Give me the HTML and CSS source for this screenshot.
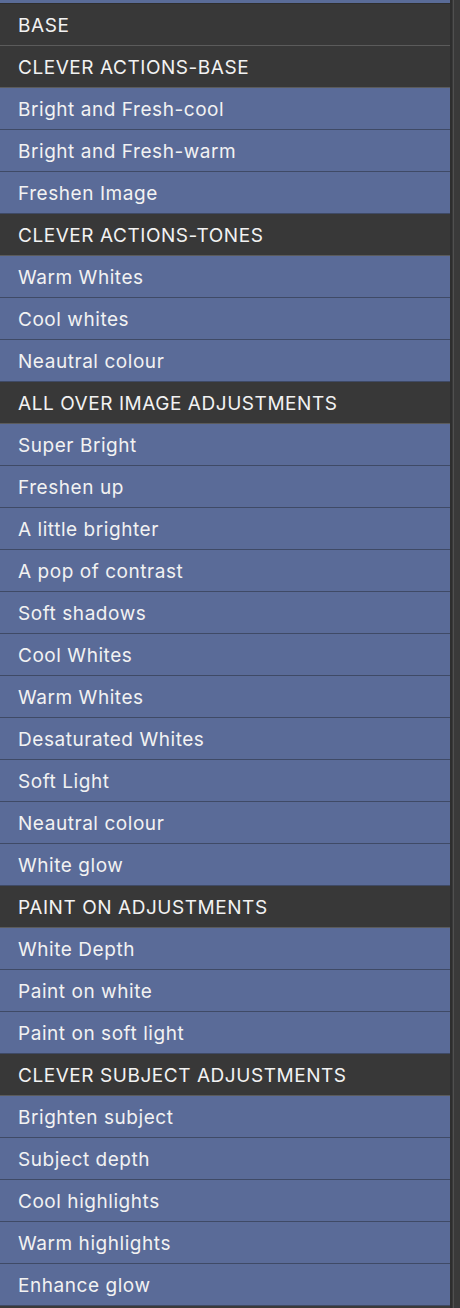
FILE: index.html
```html
<!DOCTYPE html>
<html>
<head>
<meta charset="utf-8">
<link rel="stylesheet" href="styles.css">
</head>
<body>
<div class="panel">
  <div class="list">
    <div class="top-strip"></div>
    <div class="row head">BASE</div>
    <div class="row head">CLEVER ACTIONS-BASE</div>
    <div class="row item">Bright and Fresh-cool</div>
    <div class="row item">Bright and Fresh-warm</div>
    <div class="row item">Freshen Image</div>
    <div class="row head">CLEVER ACTIONS-TONES</div>
    <div class="row item">Warm Whites</div>
    <div class="row item">Cool whites</div>
    <div class="row item">Neautral colour</div>
    <div class="row head">ALL OVER IMAGE ADJUSTMENTS</div>
    <div class="row item">Super Bright</div>
    <div class="row item">Freshen up</div>
    <div class="row item">A little brighter</div>
    <div class="row item">A pop of contrast</div>
    <div class="row item">Soft shadows</div>
    <div class="row item">Cool Whites</div>
    <div class="row item">Warm Whites</div>
    <div class="row item">Desaturated Whites</div>
    <div class="row item">Soft Light</div>
    <div class="row item">Neautral colour</div>
    <div class="row item">White glow</div>
    <div class="row head">PAINT ON ADJUSTMENTS</div>
    <div class="row item">White Depth</div>
    <div class="row item">Paint on white</div>
    <div class="row item">Paint on soft light</div>
    <div class="row head">CLEVER SUBJECT ADJUSTMENTS</div>
    <div class="row item">Brighten subject</div>
    <div class="row item">Subject depth</div>
    <div class="row item">Cool highlights</div>
    <div class="row item">Warm highlights</div>
    <div class="row item">Enhance glow</div>
  </div>
  <div class="scroll"></div>
</div>
</body>
</html>
```
FILE: styles.css
```css
html, body {
  margin: 0;
  padding: 0;
  background: #3a3a3a;
}
.panel {
  display: flex;
  width: 460px;
  height: 1308px;
  overflow: hidden;
}
.list {
  width: 450px;
  flex: none;
  display: flex;
  flex-direction: column;
}
.top-strip {
  height: 3px;
  background: #5a6c98;
  border-bottom: 1px solid #2f2f2f;
}
.row {
  height: 40px;
  padding-top: 1px;
  border-bottom: 1px solid #444;
  display: flex;
  align-items: center;
  padding-left: 18px;
  font-family: Inter, "Liberation Sans", sans-serif;
  font-size: 19px;
  color: #f2f2f2;
  letter-spacing: 0.55px;
  box-sizing: content-box;
  flex: none;
}
.head {
  background: #383838;
  border-bottom-color: #5b5b5b;
}
.item {
  background: #5a6b98;
  border-bottom-color: #3f4a66;
}
.scroll {
  flex: none;
  width: 10px;
  background: #3a3a3a;
  border-left: 2px solid #2e2e2e;
  box-sizing: border-box;
  position: relative;
}
.scroll::after {
  content: "";
  position: absolute;
  left: 1px;
  top: 0;
  bottom: 0;
  width: 1px;
  background: #505050;
}
```
